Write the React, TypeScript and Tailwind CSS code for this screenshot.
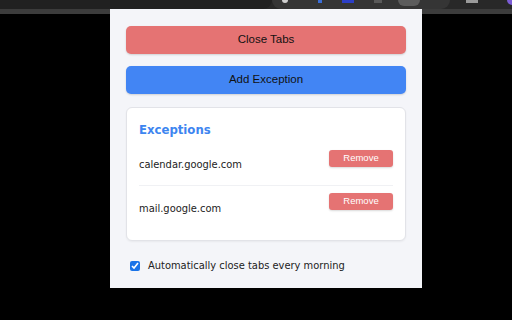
const exceptions = ["calendar.google.com", "mail.google.com"];

function Toolbar() {
  return (
    <div className="flex h-[9px] w-full bg-[#282828]">
      <div className="w-[272px] bg-[#212121] rounded-br-[10px]" />
      <div className="flex w-[178px] items-start gap-[10px] rounded-b-[10px] bg-[#353535] pl-[10px]">
        <span className="mt-0 h-[3px] w-[6px] rounded-b-full bg-[#d0d0d0]" />
        <span className="ml-[20px] h-[3px] w-[4px] bg-[#3b6ed8]" />
        <span className="ml-[10px] h-[3px] w-[12px] bg-[#2c3fc7]" />
        <span className="ml-[10px] h-[3px] w-[8px] bg-[#5a5a5a]" />
        <span className="ml-[6px] h-[6px] w-[22px] rounded-b-full bg-[#5c5c5c]" />
      </div>
      <div className="flex flex-1 items-start gap-[8px] pl-[16px]">
        <span className="h-[3px] w-[12px] bg-[#9a9a9a]" />
        <span className="ml-auto h-[5px] w-[5px] rounded-bl-full bg-[#7b5cd6]" />
      </div>
    </div>
  );
}

function Strip() {
  return <div className="h-[5px] bg-[#3c3c3c]" />;
}

const arial = { fontFamily: '"Liberation Sans", Arial, sans-serif' };

export default function App() {
  return (
    <div
      className="flex h-[320px] w-[512px] flex-col overflow-hidden bg-black font-stretch-condensed"
      style={{ fontFamily: '"DejaVu Sans Condensed", "DejaVu Sans", sans-serif' }}
    >
      <Toolbar />
      <div className="flex flex-1">
        <div className="w-[110px]">
          <Strip />
        </div>
        <div className="flex h-[279px] w-[312px] flex-col bg-[#f4f5f9] px-[16px] pt-[17px]">
          <button className="h-[28px] w-full rounded-[5px] bg-[#e57373] text-[11.5px] text-[#111] shadow-[0_1px_2px_rgba(0,0,0,0.15)]" style={arial}>
            Close Tabs
          </button>
          <button className="mt-[12px] h-[28px] w-full rounded-[5px] bg-[#4285f4] text-[11.5px] text-[#111] shadow-[0_1px_2px_rgba(0,0,0,0.15)]" style={arial}>
            Add Exception
          </button>
          <div className="mt-[13px] h-[134px] rounded-[6px] border border-[#e2e3e8] bg-white px-[12px] pt-[12px] shadow-[0_1px_2px_rgba(0,0,0,0.05)]">
            <h2 className="text-[13px] font-bold text-[#3d85f0]">Exceptions</h2>
            <ul className="mt-[2px]">
              {exceptions.map((site, i) => (
                <li key={site} className={`flex items-start justify-between py-[8px] ${i === 0 ? "border-b border-[#f0f1f4] pb-[12px]" : "pt-[7px]"}`}>
                  <span className={`${i === 0 ? "pt-[7px]" : "pt-[8px]"} text-[11px] text-[#222]`}>{site}</span>
                  <button className="h-[17px] w-[64px] rounded-[3px] bg-[#e57373] text-[9.5px] text-white shadow-[0_1px_2px_rgba(0,0,0,0.15)]" style={arial}>
                    Remove
                  </button>
                </li>
              ))}
            </ul>
          </div>
          <label className="mt-[17px] flex items-center gap-[8px] pl-[4px] text-[11px] text-[#222]">
            <input type="checkbox" defaultChecked className="h-[10px] w-[10px] accent-[#1a73e8]" />
            Automatically close tabs every morning
          </label>
        </div>
        <div className="flex-1">
          <Strip />
        </div>
      </div>
    </div>
  );
}
